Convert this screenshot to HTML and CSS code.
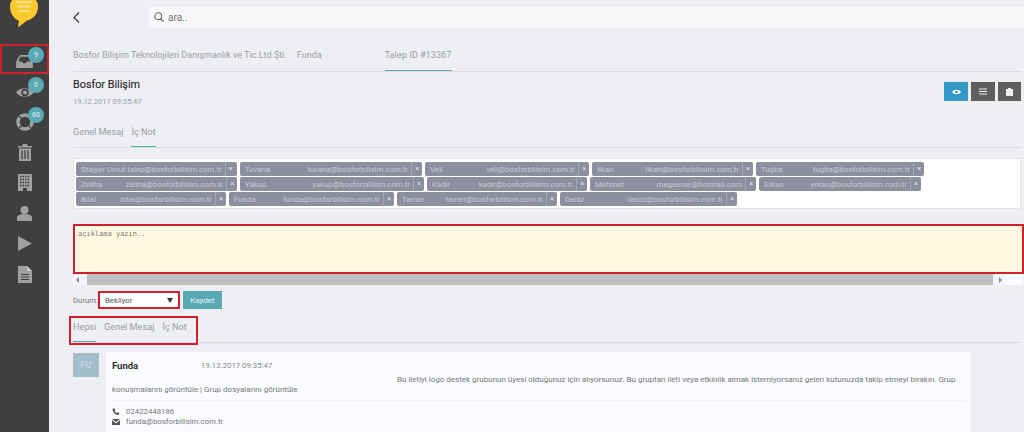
FILE: index.html
```html
<!DOCTYPE html>
<html lang="tr">
<head>
<meta charset="utf-8">
<title>Talep</title>
<link rel="stylesheet" href="styles.css">
</head>
<body>
<div class="app">
  <aside class="sidebar">
    <div class="logo">
      <svg width="32" height="28" viewBox="0 0 32 28"><path d="M16 -6C24 -6 30 0 30 6.500C30 13 26 19 19 20.500L10 27.500L11 21C5 18 2 13 2 6.500C2 0 8 -6 16 -6Z" fill="#fcc92f"/><path d="M8 2H24M9 6.500H23M11 11H21" stroke="#fde9a3" stroke-width="1.500" fill="none"/></svg>
    </div>
    <nav class="nav">
      <a class="nav-item nav-first"><svg width="17" height="13" viewBox="0 0 18 14"><path d="M4 0H14L18 7V14H0V7Z" fill="#a0a0a0"/><path d="M4.500 2H13.500L15.500 7H11.500L10.500 9H7.500L6.500 7H2.500Z" fill="#3f3f3f"/></svg><span class="badge">9</span></a>
      <a class="nav-item"><svg width="18" height="13" viewBox="0 0 19 14"><path d="M0 8C4 2 15 2 19 8C15 14 4 14 0 8Z" fill="#a0a0a0"/><circle cx="9.500" cy="8" r="4" fill="#3f3f3f"/><circle cx="9.500" cy="8" r="2.200" fill="#a0a0a0"/></svg><span class="badge">0</span></a>
      <a class="nav-item"><svg width="18" height="18" viewBox="0 0 18 18"><circle cx="9" cy="9" r="7" fill="none" stroke="#a0a0a0" stroke-width="3.600"/><path d="M3 3L6 6M15 3L12 6M3 15L6 12M15 15L12 12" stroke="#3f3f3f" stroke-width="1.200"/></svg><span class="badge">60</span></a>
      <a class="nav-item"><svg width="14" height="17" viewBox="0 0 14 17"><path d="M0 2H4.500V0H9.500V2H14V3.500H0ZM1 4.500H13V17H1Z" fill="#a0a0a0"/><path d="M4 6.500V15M7 6.500V15M10 6.500V15" stroke="#3f3f3f" stroke-width="1.200"/></svg></a>
      <a class="nav-item"><svg width="14" height="17" viewBox="0 0 14 17"><path d="M0 0H14V17H9V14H5V17H0Z" fill="#a0a0a0"/><path d="M2 2.500H12M2 5.500H12M2 8.500H12M2 11.500H12" stroke="#3f3f3f" stroke-width="1.300" stroke-dasharray="1.500 1"/></svg></a>
      <a class="nav-item"><svg width="15" height="15" viewBox="0 0 15 15"><circle cx="7.500" cy="4" r="4" fill="#a0a0a0"/><path d="M0 15V11.500C0 9.500 3 8 7.500 8C12 8 15 9.500 15 11.500V15Z" fill="#a0a0a0"/></svg></a>
      <a class="nav-item"><svg width="14" height="15" viewBox="0 0 14 15"><path d="M0 0L14 7.500L0 15Z" fill="#a0a0a0"/></svg></a>
      <a class="nav-item"><svg width="14" height="17" viewBox="0 0 14 17"><path d="M0 0H9L14 5V17H0Z" fill="#a0a0a0"/><path d="M9 0L14 5H9Z" fill="#c8c8c8"/><path d="M3 8.500H11M3 11H11M3 13.500H11" stroke="#3f3f3f" stroke-width="1.100"/></svg></a>
    </nav>
  </aside>

  <main class="main">
    <header class="topbar">
      <svg class="back" width="7" height="11" viewBox="0 0 7 11"><path d="M6 0.500L1 5.500L6 10.500" fill="none" stroke="#444" stroke-width="1.300"/></svg>
      <div class="search">
        <svg width="10" height="10" viewBox="0 0 10 10"><circle cx="4.200" cy="4.200" r="3.400" fill="none" stroke="#666" stroke-width="1.100"/><path d="M6.700 6.700L9.600 9.600" stroke="#666" stroke-width="1.300"/></svg>
        <span>ara..</span>
      </div>
    </header>

    <div class="crumbs">
      <span class="crumb">Bosfor Bilişim Teknolojileri Danışmanlık ve Tic.Ltd.Şti.</span>
      <span class="crumb crumb-person">Funda</span>
      <span class="crumb crumb-active">Talep ID #13367</span>
    </div>

    <section class="head">
      <div>
        <h1 class="title">Bosfor Bilişim</h1>
        <div class="stamp">19.12.2017 09:35:47</div>
      </div>
      <div class="actions">
        <button class="btn btn-blue"><svg width="9" height="6" viewBox="0 0 9 6"><path d="M0 3C2 0 7 0 9 3C7 6 2 6 0 3Z" fill="#fff"/><circle cx="4.500" cy="3" r="1.300" fill="#3498c9"/></svg></button>
        <button class="btn btn-dark"><svg width="8" height="7" viewBox="0 0 8 7"><path d="M0 1H8M0 3.500H8M0 6H8" stroke="#eee" stroke-width="1.200"/></svg></button>
        <button class="btn btn-dark btn-narrow"><svg width="7" height="8" viewBox="0 0 7 8"><path d="M2 1V0H5V1H7V8H0V1Z" fill="#eee"/></svg></button>
      </div>
    </section>

    <div class="tabs tabs-note">
      <span class="tab">Genel Mesaj</span>
      <span class="tab tab-on-green">İç Not</span>
    </div>

    <div class="tagbox">
      <div class="tagrow">
        <span class="tag" style="width:161px"><span>Stajyer Umut talep@bosforbilisim.com.tr</span><i>×</i></span>
        <span class="tag" style="width:182px"><span>Tuvana</span><span class="mail">tuvana@bosforbilisim.com.tr</span><i>×</i></span>
        <span class="tag" style="width:164px"><span>Veli</span><span class="mail">veli@bosforbilisim.com.tr</span><i>×</i></span>
        <span class="tag" style="width:161px"><span>İlkan</span><span class="mail">ilkan@bosforbilisim.com.tr</span><i>×</i></span>
        <span class="tag" style="width:168px"><span>Tuğba</span><span class="mail">tugba@bosforbilisim.com.tr</span><i>×</i></span>
      </div>
      <div class="tagrow">
        <span class="tag" style="width:161px"><span>Zeliha</span><span class="mail">zeliha@bosforbilisim.com.tr</span><i>×</i></span>
        <span class="tag" style="width:184px"><span>Yakup</span><span class="mail">yakup@bosforbilisim.com.tr</span><i>×</i></span>
        <span class="tag" style="width:160px"><span>Kadir</span><span class="mail">kadir@bosforbilisim.com.tr</span><i>×</i></span>
        <span class="tag" style="width:166px"><span>Mehmet</span><span class="mail">meguener@hotmail.com</span><i>×</i></span>
        <span class="tag" style="width:162px"><span>Erkan</span><span class="mail">erkan@bosforbilisim.com.tr</span><i>×</i></span>
      </div>
      <div class="tagrow">
        <span class="tag" style="width:150px"><span>Bilal</span><span class="mail">bilal@bosforbilisim.com.tr</span><i>×</i></span>
        <span class="tag" style="width:165px"><span>Funda</span><span class="mail">funda@bosforbilisim.com.tr</span><i>×</i></span>
        <span class="tag" style="width:160px"><span>Tamer</span><span class="mail">tamer@bosforbilisim.com.tr</span><i>×</i></span>
        <span class="tag" style="width:177px"><span>Deniz</span><span class="mail">deniz@bosforbilisim.com.tr</span><i>×</i></span>
      </div>
    </div>

    <div class="note">
      <div class="note-area">açıklama yazın..</div>
      <div class="note-scroll">
        <span class="arrow arrow-left"></span>
        <span class="thumb"></span>
        <span class="arrow arrow-right"></span>
        <span class="corner"></span>
      </div>
    </div>

    <div class="status">
      <label class="status-label">Durum:</label>
      <div class="select"><span>Bekliyor</span><b></b></div>
      <button class="save">Kaydet</button>
    </div>

    <div class="tabs tabs-feed">
      <div class="tabs-mark">
        <span class="tab tab-on">Hepsi</span>
        <span class="tab">Genel Mesaj</span>
        <span class="tab">İç Not</span>
      </div>
    </div>

    <article class="post">
      <div class="avatar">FU</div>
      <div class="card">
        <div class="card-head"><strong>Funda</strong><time>19.12.2017 09:35:47</time></div>
        <p class="msg">Bu iletiyi logo destek grubunun üyesi olduğunuz için alıyorsunuz. Bu gruptan ileti veya etkinlik almak istemiyorsanız gelen kutunuzda takip etmeyi bırakın. Grup konuşmalarını görüntüle | Grup dosyalarını görüntüle</p>
        <div class="contact">
          <div class="contact-row"><svg width="7" height="7" viewBox="0 0 7 7"><path d="M0 1L1.500 0L3 2L2 3C2.500 4 3 4.500 4 5L5 4L7 5.500L6 7C3 7 0 4 0 1Z" fill="#555"/></svg><span>02422448186</span></div>
          <div class="contact-row"><svg width="8" height="6" viewBox="0 0 8 6"><path d="M0 0H8L4 3ZM0 1.200L4 4.200L8 1.200V6H0Z" fill="#555"/></svg><span>funda@bosforbilisim.com.tr</span></div>
        </div>
      </div>
    </article>
  </main>
</div>
</body>
</html>
```
FILE: styles.css
```css
*, *::before, *::after { box-sizing: border-box; }
html, body { margin: 0; height: 432px; overflow: hidden; }
body { font-family: Roboto, "Liberation Sans", sans-serif; color: #9a9da8; background: #eeeff3; }
.app { display: flex; width: 1024px; height: 432px; overflow: hidden; }

.sidebar { flex: 0 0 49px; background: #3f3f3f; display: flex; flex-direction: column; }
.logo { height: 44px; padding: 0 0 0 8px; }
.logo svg { display: block; }
.nav { display: flex; flex-direction: column; }
.nav-item { position: relative; height: 30.500px; display: flex; align-items: center; justify-content: center; }
.nav-first { outline: 2px solid #d0202e; outline-offset: -2px; height: 29.500px; margin-bottom: 2.250px; padding-top: 5px; }
.badge { position: absolute; left: 28px; top: 1px; width: 16px; height: 16px; border-radius: 50%; background: #5aa9b5; color: #e8f2f4; font-size: 7px; line-height: 16px; text-align: center; }
.nav-first .badge { top: 3px; }

.main { flex: 1; min-width: 0; padding: 0 3px 0 24px; }
.topbar { display: flex; align-items: center; height: 35px; }
.back { margin-right: 69px; margin-top: -1px; }
.search { flex: 1; height: 21px; margin-right: -3px; margin-top: -1px; background: #f7f8fa; display: flex; align-items: center; gap: 4px; padding-left: 5px; font-size: 10px; color: #777; }
.search svg { flex: none; }

.crumbs { display: flex; height: 37px; border-bottom: 1px solid #d9dbe0; font-size: 9px; color: #9a9da8; align-items: flex-start; }
.crumb { line-height: 40px; }
.crumb-person { margin-left: 10px; }
.crumb-active { margin-left: 63px; width: 67px; white-space: nowrap; border-bottom: 1px solid #5aa9b5; height: 36px; font-size: 9.200px; }

.head { display: flex; justify-content: space-between; padding-top: 5px; height: 46px; }
.title { margin: 0; font-size: 10.800px; font-weight: 400; color: #1c1c1c; line-height: 15px; -webkit-text-stroke: 0.100px #1c1c1c; }
.stamp { font-size: 7.500px; color: #9a9da8; margin-top: 5px; line-height: 10px; }
.actions { display: flex; gap: 3px; padding-top: 5px; }
.btn { width: 24px; height: 19px; border: 0; padding: 0; display: flex; align-items: center; justify-content: center; }
.btn-blue { background: #3498c9; }
.btn-dark { background: #5f5f5f; }
.btn-narrow { width: 23px; }

.tabs { display: flex; border-bottom: 1px solid #d9dbe0; font-size: 9.200px; color: #9a9da8; }
.tabs-note { height: 30px; gap: 8px; line-height: 27px; align-items: flex-start; }
.tab { display: block; }
.tab-on-green { border-bottom: 1px solid #4fb0a5; height: 29px; }

.tagbox { height: 51px; margin-top: 10px; background: #fff; border: 1px solid #e1e3e8; padding: 3px 2px; display: flex; flex-direction: column; gap: 1px; }
.tagrow { display: flex; gap: 3px; }
.tag { height: 14px; flex: none; display: flex; align-items: center; padding-left: 5px; background: #8d8f9f; border-radius: 2px; color: #c8cad3; font-size: 7.800px; white-space: nowrap; overflow: hidden; }
.tag .mail { margin-left: auto; }
.tag i { flex: 0 0 11px; margin-left: 3px; height: 14px; border-left: 1px solid #a5a7b4; font-style: normal; font-size: 7px; line-height: 14px; text-align: center; color: #e6e6ec; }

.note { margin-top: 15px; margin-right: -3px; }
.note-area { height: 50px; background: #fff7df; border: 2px solid #d0202e; padding: 3.500px 3px; font-family: "DejaVu Sans Mono", monospace; font-size: 7px; line-height: 9px; color: #777; }
.note-scroll { display: flex; height: 11px; align-items: stretch; background: #f4f5f8; margin-right: 1px; }
.arrow { flex: 0 0 14px; position: relative; }
.arrow::after { content: ""; position: absolute; top: 3px; border: 3px solid transparent; }
.arrow-left::after { left: 3px; border-right-color: #888; border-left-width: 0; }
.arrow-right::after { left: 6px; border-left-color: #888; border-right-width: 0; }
.thumb { flex: 0 0 906px; background: #bfbfbf; }
.corner { flex: 1; background: #fbfcff; }

.status { display: flex; align-items: center; margin-top: 5px; height: 20px; }
.status-label { font-size: 7.800px; color: #777; width: 25px; }
.select { width: 82px; height: 18px; border: 2px solid #d0202e; background: #fff; display: flex; align-items: center; justify-content: space-between; padding: 0 5px; font-size: 7.800px; color: #555; }
.select b { width: 0; height: 0; border: 3px solid transparent; border-top: 5px solid #333; border-bottom-width: 0; }
.save { margin-left: 3px; width: 39px; height: 18px; padding: 0; border: 0; background: #5aa9b5; color: #e8f4f6; font: 8px Roboto, sans-serif; }

.tabs-feed { height: 31px; margin-top: 2px; }
.tabs-mark { position: relative; display: flex; gap: 8px; line-height: 30px; height: 30px; font-size: 9.200px; }
.tabs-mark::after { content: ""; position: absolute; left: -4px; top: 4px; width: 129px; height: 29px; border: 2px solid #d0202e; }
.tab-on { border-bottom: 1px solid #5ba3c7; width: 23px; height: 30px; }

.post { display: flex; gap: 7px; margin-top: 9px; margin-right: 50px; }
.avatar { flex: 0 0 26px; height: 24px; background: #a3bfcc; color: #cfe0e8; font-size: 9px; line-height: 25px; text-align: center; margin-top: 1px; }
.card { flex: 1; height: 90px; background: #fafbff; padding: 6px 6px 0; }
.card-head { display: flex; height: 14px; align-items: center; }
.card-head strong { width: 89px; font-size: 9.500px; color: #333; }
.card-head time { font-size: 7.800px; color: #888; }
.msg { margin: 3px 0 0; padding-bottom: 5px; border-bottom: 1px solid #eff0f4; text-indent: 285px; font-size: 8px; line-height: 10px; color: #777; }
.contact { padding-top: 5px; }
.contact-row { display: flex; align-items: center; height: 10.500px; gap: 6px; font-size: 7.800px; color: #777; }
.contact-row svg { flex: 0 0 8px; }
```
